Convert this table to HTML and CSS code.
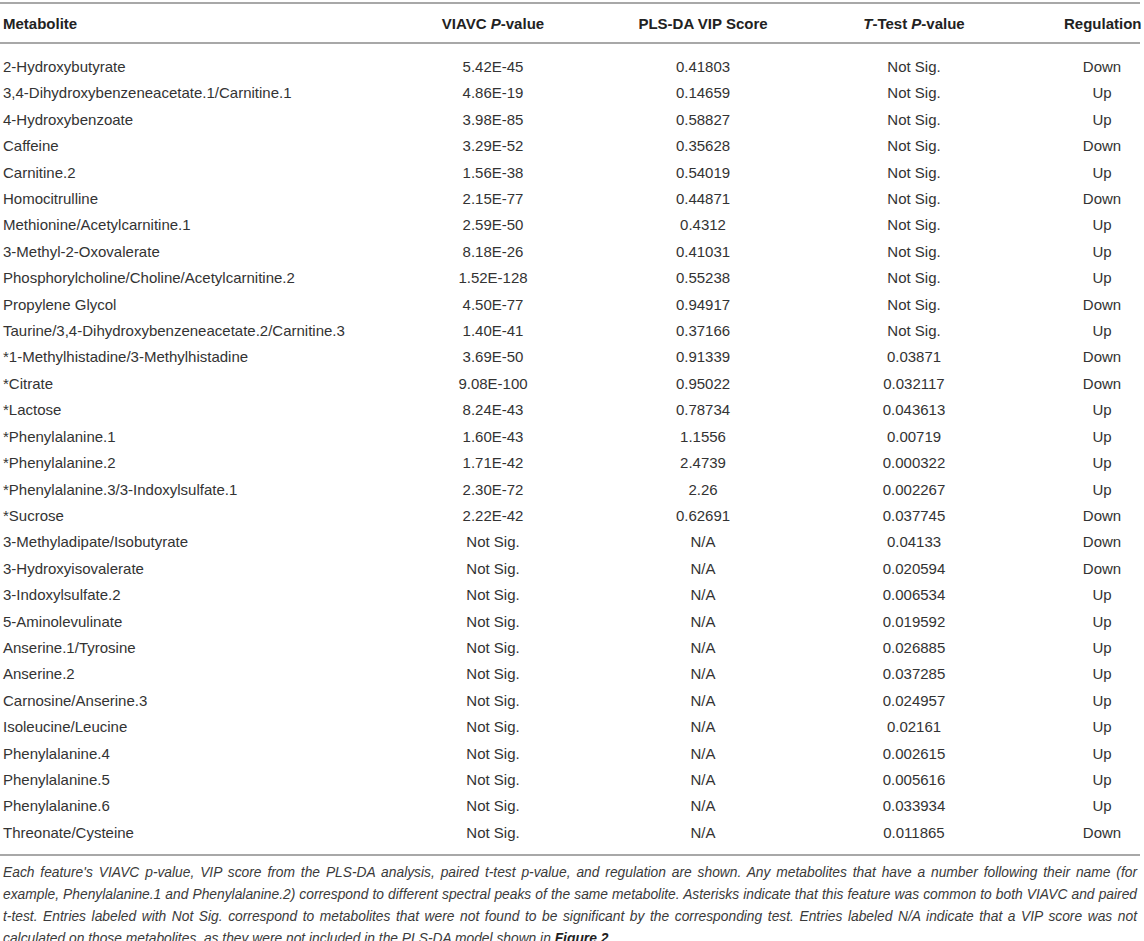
FILE: index.html
```html
<!DOCTYPE html>
<html lang="en">
<head>
  <meta charset="UTF-8" />
  <title>Table - Metabolites</title>
  <link rel="stylesheet" href="styles.css">
</head>
<body>
  <table id="metabolites">
    <colgroup>
      <col class="col-name">
      <col class="col-viavc">
      <col class="col-vip">
      <col class="col-ttest">
      <col class="col-reg">
    </colgroup>
    <thead>
      <tr>
        <th class="name">Metabolite</th>
        <th>VIAVC <i>P</i>-value</th>
        <th>PLS-DA VIP Score</th>
        <th><i>T</i>-Test <i>P</i>-value</th>
        <th class="reg">Regulation</th>
      </tr>
    </thead>
    <tbody>
      <tr><td class="name">2-Hydroxybutyrate</td><td>5.42E-45</td><td>0.41803</td><td>Not Sig.</td><td class="reg">Down</td></tr>
      <tr><td class="name">3,4-Dihydroxybenzeneacetate.1/Carnitine.1</td><td>4.86E-19</td><td>0.14659</td><td>Not Sig.</td><td class="reg">Up</td></tr>
      <tr><td class="name">4-Hydroxybenzoate</td><td>3.98E-85</td><td>0.58827</td><td>Not Sig.</td><td class="reg">Up</td></tr>
      <tr><td class="name">Caffeine</td><td>3.29E-52</td><td>0.35628</td><td>Not Sig.</td><td class="reg">Down</td></tr>
      <tr><td class="name">Carnitine.2</td><td>1.56E-38</td><td>0.54019</td><td>Not Sig.</td><td class="reg">Up</td></tr>
      <tr><td class="name">Homocitrulline</td><td>2.15E-77</td><td>0.44871</td><td>Not Sig.</td><td class="reg">Down</td></tr>
      <tr><td class="name">Methionine/Acetylcarnitine.1</td><td>2.59E-50</td><td>0.4312</td><td>Not Sig.</td><td class="reg">Up</td></tr>
      <tr><td class="name">3-Methyl-2-Oxovalerate</td><td>8.18E-26</td><td>0.41031</td><td>Not Sig.</td><td class="reg">Up</td></tr>
      <tr><td class="name">Phosphorylcholine/Choline/Acetylcarnitine.2</td><td>1.52E-128</td><td>0.55238</td><td>Not Sig.</td><td class="reg">Up</td></tr>
      <tr><td class="name">Propylene Glycol</td><td>4.50E-77</td><td>0.94917</td><td>Not Sig.</td><td class="reg">Down</td></tr>
      <tr><td class="name">Taurine/3,4-Dihydroxybenzeneacetate.2/Carnitine.3</td><td>1.40E-41</td><td>0.37166</td><td>Not Sig.</td><td class="reg">Up</td></tr>
      <tr><td class="name">*1-Methylhistadine/3-Methylhistadine</td><td>3.69E-50</td><td>0.91339</td><td>0.03871</td><td class="reg">Down</td></tr>
      <tr><td class="name">*Citrate</td><td>9.08E-100</td><td>0.95022</td><td>0.032117</td><td class="reg">Down</td></tr>
      <tr><td class="name">*Lactose</td><td>8.24E-43</td><td>0.78734</td><td>0.043613</td><td class="reg">Up</td></tr>
      <tr><td class="name">*Phenylalanine.1</td><td>1.60E-43</td><td>1.1556</td><td>0.00719</td><td class="reg">Up</td></tr>
      <tr><td class="name">*Phenylalanine.2</td><td>1.71E-42</td><td>2.4739</td><td>0.000322</td><td class="reg">Up</td></tr>
      <tr><td class="name">*Phenylalanine.3/3-Indoxylsulfate.1</td><td>2.30E-72</td><td>2.26</td><td>0.002267</td><td class="reg">Up</td></tr>
      <tr><td class="name">*Sucrose</td><td>2.22E-42</td><td>0.62691</td><td>0.037745</td><td class="reg">Down</td></tr>
      <tr><td class="name">3-Methyladipate/Isobutyrate</td><td>Not Sig.</td><td>N/A</td><td>0.04133</td><td class="reg">Down</td></tr>
      <tr><td class="name">3-Hydroxyisovalerate</td><td>Not Sig.</td><td>N/A</td><td>0.020594</td><td class="reg">Down</td></tr>
      <tr><td class="name">3-Indoxylsulfate.2</td><td>Not Sig.</td><td>N/A</td><td>0.006534</td><td class="reg">Up</td></tr>
      <tr><td class="name">5-Aminolevulinate</td><td>Not Sig.</td><td>N/A</td><td>0.019592</td><td class="reg">Up</td></tr>
      <tr><td class="name">Anserine.1/Tyrosine</td><td>Not Sig.</td><td>N/A</td><td>0.026885</td><td class="reg">Up</td></tr>
      <tr><td class="name">Anserine.2</td><td>Not Sig.</td><td>N/A</td><td>0.037285</td><td class="reg">Up</td></tr>
      <tr><td class="name">Carnosine/Anserine.3</td><td>Not Sig.</td><td>N/A</td><td>0.024957</td><td class="reg">Up</td></tr>
      <tr><td class="name">Isoleucine/Leucine</td><td>Not Sig.</td><td>N/A</td><td>0.02161</td><td class="reg">Up</td></tr>
      <tr><td class="name">Phenylalanine.4</td><td>Not Sig.</td><td>N/A</td><td>0.002615</td><td class="reg">Up</td></tr>
      <tr><td class="name">Phenylalanine.5</td><td>Not Sig.</td><td>N/A</td><td>0.005616</td><td class="reg">Up</td></tr>
      <tr><td class="name">Phenylalanine.6</td><td>Not Sig.</td><td>N/A</td><td>0.033934</td><td class="reg">Up</td></tr>
      <tr><td class="name">Threonate/Cysteine</td><td>Not Sig.</td><td>N/A</td><td>0.011865</td><td class="reg">Down</td></tr>
    </tbody>
  </table>

  <div class="legend">
    <p class="legend-body">Each feature's VIAVC p-value, VIP score from the PLS-DA analysis, paired t-test p-value, and regulation are shown. Any metabolites that have a number following their name (for<br>example, Phenylalanine.1 and Phenylalanine.2) correspond to different spectral peaks of the same metabolite. Asterisks indicate that this feature was common to both VIAVC and paired<br>t-test. Entries labeled with Not Sig. correspond to metabolites that were not found to be significant by the corresponding test. Entries labeled N/A indicate that a VIP score was not</p>
    <p>calculated on those metabolites, as they were not included in the PLS-DA model shown in <b>Figure 2</b>.</p>
  </div>
</body>
</html>
```

FILE: styles.css
```css
body {
  margin: 0;
  padding: 2px 4px 0 0;
  background-color: white;
  color: #333;
  font-family: "Liberation Sans", Arial, sans-serif;
}

table {
  width: 1140px;
  border-collapse: collapse;
  table-layout: fixed;
  font-size: 15px;
  border-top: 2px solid #a8a8a8;
  border-bottom: 2px solid #a8a8a8;
}

.col-name  { width: 400px; }
.col-viavc { width: 186px; }
.col-vip   { width: 234px; }
.col-ttest { width: 188px; }
.col-reg   { width: 132px; }

th {
  height: 38px;
  padding: 0;
  font-weight: bold;
  color: #222;
  text-align: center;
  vertical-align: middle;
  border-bottom: 2px solid #a8a8a8;
}

td {
  padding: 0;
  height: 26.4px;
  line-height: 26.4px;
  text-align: center;
  white-space: nowrap;
}

.name {
  text-align: left;
  padding-left: 3px;
}

.reg {
  padding-left: 56px;
}

tbody tr:first-child td {
  padding-top: 10px;
}

tbody tr:last-child td {
  padding-bottom: 8px;
}

.legend {
  margin-top: 6px;
  padding-left: 3px;
  width: 1134px;
  font-size: 13.8px;
  font-style: italic;
  line-height: 21.8px;
  color: #3a3a3a;
}

.legend p {
  margin: 0;
}

.legend-body {
  text-align: justify;
  text-align-last: justify;
}

.legend b {
  color: #222;
}
```
